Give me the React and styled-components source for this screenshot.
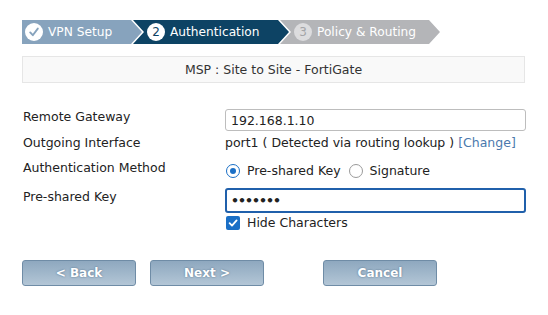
import React from 'react'
import styled, { createGlobalStyle } from 'styled-components'

const Global = createGlobalStyle`
  body {
    margin: 0;
    background: #fff;
    font-family: "DejaVu Sans", Verdana, sans-serif;
    font-size: 12.5px;
    color: #222;
  }
`

const steps = [
  { label: 'VPN Setup', state: 'done' },
  { label: 'Authentication', state: 'current', n: 2 },
  { label: 'Policy & Routing', state: 'todo', n: 3 },
]

function App() {
  return (
    <Page>
      <Global />
      <Crumbs>
        {steps.map((s, i) => (
          <Step key={s.label} $state={s.state} $first={i === 0} $w={[120, 156, 160][i]}>
            <Bullet $state={s.state}>
              {s.state === 'done' ? (
                <svg width="12" height="12" viewBox="0 0 12 12">
                  <path d="M2.2 6.4 L4.8 9.2 L9.8 2.6" fill="none" stroke="#87a3bd" strokeWidth="1.9" strokeLinecap="round" strokeLinejoin="round" />
                </svg>
              ) : s.n}
            </Bullet>
            {s.label}
          </Step>
        ))}
      </Crumbs>

      <TitleBar>MSP : Site to Site - FortiGate</TitleBar>

      <Form>
        <Row $h={22}>
          <Label $top={0}>Remote Gateway</Label>
          <TextInput defaultValue="192.168.1.10" />
        </Row>
        <Row $h={24}>
          <Label $top={4}>Outgoing Interface</Label>
          <Value $top={4}>
            port1 ( Detected via routing lookup ) <Link>[Change]</Link>
          </Value>
        </Row>
        <Row $h={33}>
          <Label $top={5}>Authentication Method</Label>
          <Value $top={8}>
            <Choice>
              <Radio $on />
              Pre-shared Key
            </Choice>
            <Choice>
              <Radio />
              Signature
            </Choice>
          </Value>
        </Row>
        <Row $h={27}>
          <Label $top={1}>Pre-shared Key</Label>
          <TextInput type="password" defaultValue="secret1" $focus />
        </Row>
        <Row $h={18}>
          <span />
          <Choice>
            <Check>
              <svg width="10" height="10" viewBox="0 0 10 10">
                <path d="M1.6 5.2 L4 7.6 L8.6 2.4" fill="none" stroke="#fff" strokeWidth="1.8" strokeLinecap="round" strokeLinejoin="round" />
              </svg>
            </Check>
            Hide Characters
          </Choice>
        </Row>
      </Form>

      <Buttons>
        <Button>&lt; Back</Button>
        <Button>Next &gt;</Button>
        <Button $gap>Cancel</Button>
      </Buttons>
    </Page>
  )
}

export default App

const Page = styled.div`
  width: 503px;
  padding: 20px 0 0 22px;
`

const Crumbs = styled.div`
  display: flex;
  height: 24px;
`

const stepBg = { done: '#87a3bd', current: '#0d4364', todo: '#b4b5b8' }

const Step = styled.div`
  width: ${p => p.$w}px;
  flex: none;
  margin-left: ${p => (p.$first ? 0 : -9)}px;
  padding-left: ${p => (p.$first ? 3 : 14)}px;
  box-sizing: border-box;
  display: flex;
  align-items: center;
  gap: 5px;
  color: #fff;
  font-size: 12.2px;
  background: ${p => stepBg[p.$state]};
  clip-path: ${p =>
    p.$first
      ? 'polygon(0 0, calc(100% - 11px) 0, 100% 50%, calc(100% - 11px) 100%, 0 100%)'
      : 'polygon(0 0, calc(100% - 11px) 0, 100% 50%, calc(100% - 11px) 100%, 0 100%, 11px 50%)'};
`

const Bullet = styled.span`
  width: 18px;
  height: 18px;
  border-radius: 50%;
  display: flex;
  align-items: center;
  justify-content: center;
  font-size: 12px;
  background: ${p => (p.$state === 'todo' ? '#dcdcde' : '#fff')};
  color: ${p => (p.$state === 'todo' ? '#a3a4a7' : '#0d4364')};
`

const TitleBar = styled.div`
  margin-top: 12px;
  height: 25px;
  border: 1px solid #e6e6e6;
  background: #f9f9f9;
  display: flex;
  align-items: center;
  justify-content: center;
  color: #333;
`

const Form = styled.div`
  margin-top: 26px;
  display: flex;
  flex-direction: column;
`

const Row = styled.div`
  display: grid;
  grid-template-columns: 203px 1fr;
  align-items: start;
  height: ${p => p.$h}px;
`

const Label = styled.div`
  padding: ${p => p.$top}px 0 0 1px;
  line-height: 16px;
`

const Value = styled.div`
  padding-top: ${p => p.$top}px;
  line-height: 16px;
  display: flex;
  align-items: center;
  gap: 4px;
  white-space: nowrap;
`

const Link = styled.span`
  color: #4a79ad;
`

const TextInput = styled.input`
  box-sizing: border-box;
  width: 301px;
  height: ${p => (p.$focus ? 25 : 22)}px;
  border: ${p => (p.$focus ? '2px solid #2060ab' : '1px solid #bdbdbd')};
  border-radius: 3px;
  padding: 0 ${p => (p.$focus ? 4 : 5)}px;
  font-family: "DejaVu Sans", Verdana, sans-serif;
  font-size: 12.5px;
  font-weight: ${p => (p.$focus ? 'bold' : 'normal')};
  color: #222;
  outline: none;
  letter-spacing: ${p => (p.$focus ? '-1px' : 'normal')};
`

const Choice = styled.label`
  display: flex;
  align-items: center;
  gap: 7px;
  margin-right: 3px;
  line-height: 16px;
`

const Radio = styled.span`
  box-sizing: border-box;
  width: 14px;
  height: 14px;
  border-radius: 50%;
  border: 1.5px solid ${p => (p.$on ? '#1a6fc6' : '#9a9a9a')};
  display: flex;
  align-items: center;
  justify-content: center;
  margin-left: 1px;
  &::after {
    content: '';
    width: 6px;
    height: 6px;
    border-radius: 50%;
    background: ${p => (p.$on ? '#1a6fc6' : 'transparent')};
  }
`

const Check = styled.span`
  width: 14px;
  height: 14px;
  border-radius: 2px;
  background: #1a6fc6;
  display: flex;
  align-items: center;
  justify-content: center;
  margin-left: 1px;
`

const Buttons = styled.div`
  margin-top: 27px;
  display: flex;
  gap: 14px;
`

const Button = styled.button`
  width: 114px;
  height: 26px;
  margin-left: ${p => (p.$gap ? 45 : 0)}px;
  border: 1px solid #6f8ca6;
  border-radius: 3px;
  background: linear-gradient(#8ea8bf, #b3c6d6);
  color: #fff;
  font-family: "DejaVu Sans", Tahoma, sans-serif;
  font-weight: bold;
  font-size: 12px;
  text-shadow: 0 0 2px #4d6b86;
  padding: 0;
`
